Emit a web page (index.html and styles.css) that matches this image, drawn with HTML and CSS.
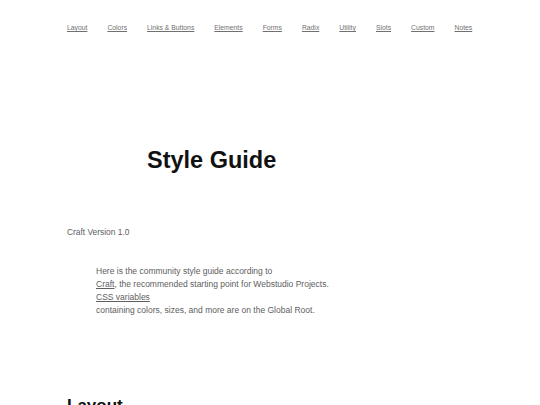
FILE: index.html
```html
<!DOCTYPE html>
<html>
<head>
<meta charset="utf-8">
<link rel="stylesheet" href="styles.css">
</head>
<body>
<div class="page">
  <nav class="nav">
    <a href="#">Layout</a>
    <a href="#">Colors</a>
    <a href="#">Links &amp; Buttons</a>
    <a href="#">Elements</a>
    <a href="#">Forms</a>
    <a href="#">Radix</a>
    <a href="#">Utility</a>
    <a href="#">Slots</a>
    <a href="#">Custom</a>
    <a href="#">Notes</a>
  </nav>
  <h1 class="title">Style Guide</h1>
  <p class="version">Craft Version 1.0</p>
  <div class="intro">
    <div>Here is the community style guide according to</div>
    <div><a href="#">Craft</a>, the recommended starting point for Webstudio Projects.</div>
    <div><a href="#">CSS variables</a></div>
    <div>containing colors, sizes, and more are on the Global Root.</div>
  </div>
  <h2 class="section">Layout</h2>
</div>
</body>
</html>
```
FILE: styles.css
```css
html, body {
  margin: 0;
  padding: 0;
  background: #ffffff;
}
body {
  font-family: "Liberation Sans", Arial, sans-serif;
  overflow: hidden;
}
.page {
  padding: 23px 0 0 67px;
}
.nav {
  display: flex;
  gap: 20px;
  font-size: 6.8px;
  line-height: 10px;
}
.nav a {
  color: #707070;
  text-decoration: underline;
}
.title {
  margin: 107px 0 0 80px;
  font-size: 23.5px;
  line-height: 40px;
  font-weight: bold;
  color: #111;
}
.version {
  margin: 46px 0 0 0;
  font-size: 8.4px;
  line-height: 12px;
  color: #606060;
}
.intro {
  margin: 27px 0 0 29px;
  font-size: 8.5px;
  line-height: 13px;
  color: #606060;
}
.intro a {
  color: #606060;
  text-decoration: underline;
}
.section {
  margin: 78px 0 0 0;
  font-size: 17px;
  line-height: 22px;
  font-weight: bold;
  color: #111;
}
```
